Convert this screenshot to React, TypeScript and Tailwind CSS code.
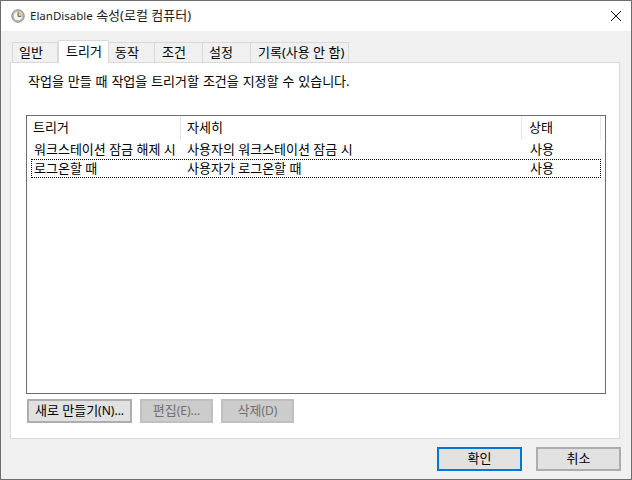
import { useState } from "react";

const TABS = [
  { label: "일반", w: "w-[46px] pl-[6px]" },
  { label: "트리거", w: "w-[51px] pl-[7px]" },
  { label: "동작", w: "w-[46px] pl-[6px]" },
  { label: "조건", w: "w-[48px] pl-[7px]" },
  { label: "설정", w: "w-[48px] pl-[6px]" },
  { label: "기록(사용 안 함)", w: "w-[98px] pl-[7px]" },
];

const ROWS = [
  { trigger: "워크스테이션 잠금 해제 시", detail: "사용자의 워크스테이션 잠금 시", state: "사용" },
  { trigger: "로그온할 때", detail: "사용자가 로그온할 때", state: "사용" },
];

function ClockIcon() {
  return (
    <svg width="14" height="14" viewBox="0 0 14 14" className="shrink-0">
      <circle cx="7" cy="7" r="6.2" fill="#c9cacb" stroke="#7f8183" />
      <circle cx="7" cy="7" r="4.7" fill="#f7f7f2" stroke="#9a9c9e" strokeWidth="0.6" />
      <path d="M7 2.6A4.4 4.4 0 0 1 11.4 7H7Z" fill="#eec77a" />
      <path d="M7 3.2V7.4H10.4" fill="none" stroke="#5c5f62" strokeWidth="1" />
    </svg>
  );
}

function Button({ label, suffix, className }: { label: string; suffix?: string; className: string }) {
  return (
    <button type="button" className={`flex items-center justify-center border-2 text-[13px] ${className}`}>
      {label}
      {suffix ? <span className="text-[12px]">{suffix}</span> : null}
    </button>
  );
}

export default function App() {
  const [tab] = useState(1);

  return (
    <div className="flex h-[480px] w-[632px] flex-col border border-[#6d6d6d] bg-[#f0f0f0] font-['Noto_Sans','Noto_Sans_CJK_KR',sans-serif] text-[13px] text-black">
      <div className="flex h-[30px] shrink-0 items-center bg-white pl-[10px] pr-[9px]">
        <ClockIcon />
        <span className="ml-[5px] text-[#1a1a1a]">
          <span className="text-[11.5px]">ElanDisable</span> 속성(로컬 컴퓨터)
        </span>
        <svg width="12" height="12" viewBox="0 0 12 12" className="ml-auto">
          <path d="M1 1L11 11M11 1L1 11" stroke="#111" strokeWidth="1" />
        </svg>
      </div>

      <div className="flex h-[31px] shrink-0 items-end pl-[11px]">
        {TABS.map((t, i) =>
          i === tab ? (
            <div
              key={t.label}
              className={`relative z-10 -mb-px flex h-[23px] items-center whitespace-nowrap border border-b-0 border-[#d9d9d9] bg-white ${t.w}`}
            >
              {t.label}
            </div>
          ) : (
            <div
              key={t.label}
              className={`flex h-[20px] items-center whitespace-nowrap border border-b-0 border-l-0 border-[#d9d9d9] first:border-l ${t.w}`}
            >
              {t.label}
            </div>
          ),
        )}
      </div>

      <div className="ml-[9px] flex h-[377px] w-[610px] shrink-0 flex-col border border-[#d9d9d9] bg-white px-[15px]">
        <p className="mt-[9px] h-[18px] whitespace-nowrap pl-[2px] leading-[18px] [word-spacing:0.5px]">
          작업을 만들 때 작업을 트리거할 조건을 지정할 수 있습니다.
        </p>

        <div className="mt-[25px] flex h-[279px] w-[580px] flex-col border border-[#6d6d6d] bg-white">
          <div className="flex h-[24px] shrink-0">
            <div className="flex w-[154px] items-center border-r border-[#e5e5e5] pl-[6px]">트리거</div>
            <div className="flex w-[341px] items-center border-r border-[#e5e5e5] pl-[6px]">자세히</div>
            <div className="flex w-[79px] items-center border-r border-[#e5e5e5] pl-[7px]">상태</div>
          </div>
          {ROWS.map((r, i) => (
            <div
              key={r.trigger}
              className={`mr-[4px] ml-[4px] flex h-[19px] items-center border border-dotted ${i === 1 ? "border-black" : "border-transparent"}`}
            >
              <div className="w-[153px] shrink-0 pl-[2px] whitespace-nowrap">{r.trigger}</div>
              <div className="w-[342px] shrink-0 pl-[2px] whitespace-nowrap">{r.detail}</div>
              <div className="pl-[3px]">{r.state}</div>
            </div>
          ))}
        </div>

        <div className="mt-[5px] flex gap-[8px] pl-[1px]">
          <Button label="새로 만들기" suffix="(N)..." className="h-[24px] w-[105px] border-[#adadad] bg-[#e1e1e1]" />
          <Button label="편집" suffix="(E)..." className="h-[24px] w-[73px] border-[#bfbfbf] bg-[#cccccc] text-[#6f6f6f]" />
          <Button label="삭제" suffix="(D)" className="h-[24px] w-[73px] border-[#bfbfbf] bg-[#cccccc] text-[#6f6f6f]" />
        </div>
      </div>

      <div className="mt-[8px] flex justify-end gap-[14px] pr-[10px]">
        <Button label="확인" className="h-[24px] w-[85px] border-[#0078d7] bg-[#e1e1e1]" />
        <Button label="취소" className="h-[24px] w-[85px] border-[#adadad] bg-[#e1e1e1]" />
      </div>
    </div>
  );
}
